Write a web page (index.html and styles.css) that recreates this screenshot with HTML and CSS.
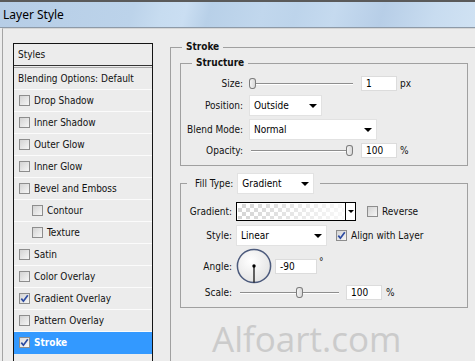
FILE: index.html
```html
<!DOCTYPE html>
<html>
<head>
<meta charset="utf-8">
<title>Layer Style</title>
<link rel="stylesheet" href="styles.css">
</head>
<body>
<div class="titlebar"><span class="title">Layer Style</span></div>
<div class="window">
  <div class="list">
    <div class="row head">Styles</div>
    <div class="row blend">Blending Options: Default</div>
    <div class="row"><span class="cb"></span>Drop Shadow</div>
    <div class="row"><span class="cb"></span>Inner Shadow</div>
    <div class="row"><span class="cb"></span>Outer Glow</div>
    <div class="row"><span class="cb"></span>Inner Glow</div>
    <div class="row"><span class="cb"></span>Bevel and Emboss</div>
    <div class="row sub"><span class="cb"></span>Contour</div>
    <div class="row sub"><span class="cb"></span>Texture</div>
    <div class="row"><span class="cb"></span>Satin</div>
    <div class="row"><span class="cb"></span>Color Overlay</div>
    <div class="row"><span class="cb"><svg class="check" viewBox="0 0 9 9"><path d="M1.3 4.6 L3.4 7.2 L7.8 1.2"/></svg></span>Gradient Overlay</div>
    <div class="row"><span class="cb"></span>Pattern Overlay</div>
    <div class="row selected"><span class="cb"><svg class="check" viewBox="0 0 9 9"><path d="M1.3 4.6 L3.4 7.2 L7.8 1.2"/></svg></span>Stroke</div>
  </div>

  <fieldset class="stroke">
    <legend class="bold-legend">Stroke</legend>

    <fieldset class="group structure">
      <legend class="bold-legend">Structure</legend>
      <div class="frow r-size">
        <span class="lbl slbl">Size:</span>
        <div class="slider s-wide"><span class="thumb t-size"></span></div>
        <span class="num">1</span><span class="unit">px</span>
      </div>
      <div class="frow">
        <span class="lbl slbl">Position:</span>
        <div class="select w-pos"><span>Outside</span><span class="arrow"></span></div>
      </div>
      <div class="frow">
        <span class="lbl slbl">Blend Mode:</span>
        <div class="select w-blend"><span>Normal</span><span class="arrow"></span></div>
      </div>
      <div class="frow">
        <span class="lbl slbl">Opacity:</span>
        <div class="slider s-wide"><span class="thumb t-opacity"></span></div>
        <span class="num">100</span><span class="unit">%</span>
      </div>
    </fieldset>

    <fieldset class="group fill">
      <legend class="fill-legend"><span class="legend-inner"><span>Fill Type:</span><span class="select w-fill"><span>Gradient</span><span class="arrow"></span></span></span></legend>
      <div class="frow">
        <span class="lbl flbl">Gradient:</span>
        <div class="grad"><span class="grad-fill"></span><span class="grad-dd"><span class="arrow small"></span></span></div>
        <span class="cb cb-rev"></span><span class="cb-text">Reverse</span>
      </div>
      <div class="frow r-style">
        <span class="lbl flbl">Style:</span>
        <div class="select w-style"><span>Linear</span><span class="arrow"></span></div>
        <span class="cb cb-align"><svg class="check" viewBox="0 0 9 9"><path d="M1.3 4.6 L3.4 7.2 L7.8 1.2"/></svg></span><span class="cb-text">Align with Layer</span>
      </div>
      <div class="frow r-angle">
        <span class="lbl flbl">Angle:</span>
        <svg class="dial" viewBox="0 0 36 36" width="36" height="36">
          <defs>
            <radialGradient id="dg" cx="0.4" cy="0.35" r="0.7">
              <stop offset="0" stop-color="#ffffff"/>
              <stop offset="1" stop-color="#e2e2e2"/>
            </radialGradient>
          </defs>
          <circle cx="18" cy="18" r="16.6" fill="url(#dg)" stroke="#4d5b7d" stroke-width="1.5"/>
          <line x1="18" y1="18" x2="18" y2="34.5" stroke="#000" stroke-width="1.2"/>
          <circle cx="18" cy="18" r="1.7" fill="#000"/>
        </svg>
        <span class="num num-angle">-90</span><span class="deg">°</span>
      </div>
      <div class="frow r-scale">
        <span class="lbl flbl">Scale:</span>
        <div class="slider s-scale"><span class="thumb t-scale"></span></div>
        <span class="num num-scale">100</span><span class="unit unit-scale">%</span>
      </div>
    </fieldset>

    <div class="watermark">Alfoart.com</div>
  </fieldset>
</div>
</body>
</html>
```

FILE: styles.css
```css
* { box-sizing: border-box; }

html, body { margin: 0; padding: 0; }

body {
  width: 475px;
  height: 361px;
  overflow: hidden;
  background: #ececec;
  font-family: "DejaVu Sans Condensed", "DejaVu Sans", sans-serif;
  font-stretch: condensed;
  font-size: 10px;
  color: #111;
}

.titlebar {
  height: 28px;
  border-top: 2px solid #5a5a5a;
  border-bottom: 1px solid #8d9aa8;
  display: flex;
  align-items: center;
  padding-left: 3px;
  background: linear-gradient(105deg, #b6cde6 0%, #bcd3ea 28%, #c7dcf0 34%, #cadef2 39%, #b8d0e8 44%, #c1d7ed 55%, #bdd4eb 62%, #c5daef 70%, #b7cee7 80%, #c8dcf0 91%, #d0e2f3 100%);
}

.title {
  font-family: "Noto Sans", sans-serif;
  font-stretch: normal;
  font-size: 12px;
  color: #000;
}

.window {
  display: flex;
  align-items: flex-start;
  margin-left: 2px;
  border-left: 1px solid #a4a4a4;
  border-top: 1px solid #d6d6d6;
  height: 333px;
  overflow: hidden;
}

/* left list */
.list {
  margin: 14px 0 0 10px;
  width: 140px;
  flex: none;
  align-self: stretch;
  border: 1px solid #141414;
  border-bottom: none;
}

.row {
  height: 22px;
  display: flex;
  align-items: center;
  gap: 4px;
  padding-left: 5px;
  border-bottom: 1px solid #fbfbfb;
  white-space: nowrap;
}

.row.head {
  padding-left: 4px;
  border-bottom: 1px solid #333;
}

.row.blend {
  margin-top: 1px;
  height: 23px;
  padding-left: 4px;
  border-top: 1px solid #a9a9a9;
}

.row.sub { padding-left: 18px; }

.row.selected {
  background: #3399ff;
  border-bottom-color: #3399ff;
  color: #fff;
  font-weight: bold;
}

.cb {
  width: 11px;
  height: 11px;
  flex: none;
  border: 1px solid #8d8d8d;
  background: linear-gradient(135deg, #d3d3d3, #f6f6f6);
  display: flex;
  align-items: center;
  justify-content: center;
}

.selected .cb { background: linear-gradient(135deg, #dcdcdc, #fafafa); }

.check {
  width: 9px;
  height: 9px;
  fill: none;
  stroke: #2c4ba2;
  stroke-width: 1.7;
}

/* right side */
fieldset { margin: 0; min-width: 0; }

.stroke {
  flex: 1;
  align-self: stretch;
  margin: 12px 0 0 17px;
  padding: 0;
  border: none;
  border-top: 1px solid #a0a0a0;
  border-left: 1px solid #a0a0a0;
}

.bold-legend {
  font-weight: bold;
  line-height: 12px;
  padding: 0 4px;
  margin-left: 11px;
}

.group {
  width: 288px;
  margin-left: 9px;
  border: 1px solid #a0a0a0;
  display: flex;
  flex-direction: column;
}

.structure {
  margin-top: 4px;
  padding: 7px 0 7px 0;
  gap: 3px;
}

.frow {
  display: flex;
  align-items: center;
  white-space: nowrap;
}

.r-size { margin-bottom: 1px; }

.lbl { text-align: right; flex: none; }
.slbl { width: 62px; margin-right: 6px; }
.flbl { width: 51px; margin-right: 4px; }

.slider {
  position: relative;
  height: 11px;
  flex: none;
}
.slider::before {
  content: "";
  position: absolute;
  left: 2px;
  right: 0;
  top: 5px;
  height: 1px;
  background: #8e8e8e;
  box-shadow: 0 1px 0 #ffffff;
}
.s-wide { width: 104px; margin-right: 8px; }
.s-scale { width: 101px; margin-left: 2px; margin-right: 7px; }

.thumb {
  position: absolute;
  top: 0;
  width: 7px;
  height: 11px;
  border: 1px solid #7c7c7c;
  border-radius: 3px 3px 3px 3px / 3px 3px 4px 4px;
  background: linear-gradient(to right, #f4f4f4, #d8d8d8);
}
.t-size { left: 0; }
.t-opacity { left: 97px; }
.t-scale { left: 58px; }

.num {
  width: 36px;
  height: 15px;
  flex: none;
  background: #fff;
  border: 1px solid #dcdcdc;
  padding-left: 4px;
  line-height: 13px;
  color: #000;
}
.num-angle { width: 42px; margin-left: 3px; }

.unit { margin-left: 3px; }
.unit-scale { margin-left: 4px; }

.deg {
  margin-left: 2px;
  align-self: flex-start;
  line-height: 12px;
  margin-top: 8px;
}

.select {
  display: flex;
  align-items: center;
  justify-content: space-between;
  height: 21px;
  flex: none;
  background: #fff;
  border: 1px solid #e2e2e2;
  padding: 0 4px 0 4px;
  color: #000;
}
.w-pos { width: 73px; }
.w-blend { width: 128px; }
.w-fill { width: 77px; }
.w-style { width: 91px; }

.arrow {
  width: 0;
  height: 0;
  border-left: 4px solid transparent;
  border-right: 4px solid transparent;
  border-top: 4px solid #000;
}
.arrow.small {
  border-left-width: 3px;
  border-right-width: 3px;
  border-top-width: 3px;
}

.fill {
  margin-top: 7px;
  padding: 8px 0 7px 0;
}

.fill-legend {
  margin-left: 6px;
  padding: 0 6px 0 8px;
}

.legend-inner {
  display: flex;
  align-items: center;
  gap: 4px;
}

.grad {
  width: 120px;
  height: 19px;
  flex: none;
  display: flex;
  border: 1px solid #000;
  background: #fff;
}
.grad-fill {
  flex: 1;
  margin: 1px;
  background:
    linear-gradient(to right, rgba(255,255,255,0.05), rgba(255,255,255,0.85)),
    conic-gradient(#d2d2d2 25%, #ffffff 0 50%, #d2d2d2 0 75%, #ffffff 0) 0 0 / 8px 8px;
}
.grad-dd {
  width: 10px;
  border-left: 1px solid #000;
  display: flex;
  align-items: center;
  justify-content: center;
}

.cb-rev { margin-left: 11px; }
.cb-align { margin-left: 9px; }
.cb-text { margin-left: 4px; }

.r-style { margin-top: 4px; }
.r-angle { margin-top: 2px; }
.r-scale { margin-top: 1px; }

.dial { flex: none; display: block; }

.watermark {
  margin: 13px 0 0 41px;
  font-family: "Open Sans", sans-serif;
  font-stretch: normal;
  font-size: 35px;
  line-height: 36px;
  color: #cbcbcb;
}
```
